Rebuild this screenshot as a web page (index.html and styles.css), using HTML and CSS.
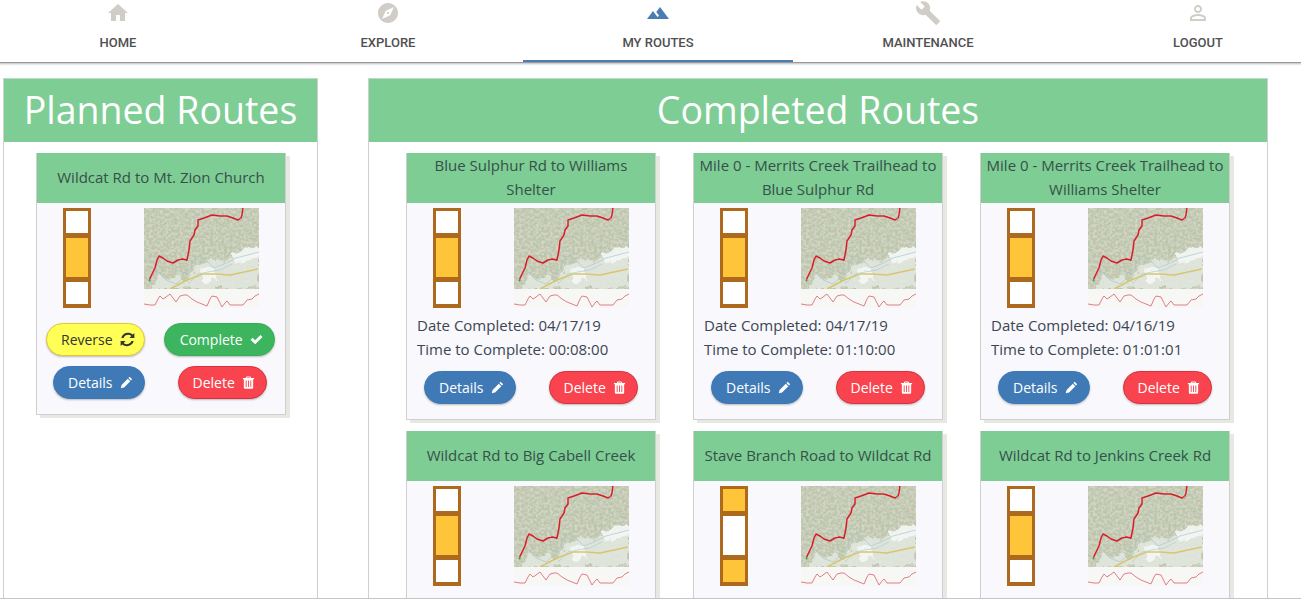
FILE: index.html
```html
<!DOCTYPE html>
<html lang="en">
<head>
    <meta charset="UTF-8" />
    <meta name="viewport" content="width=device-width, initial-scale=1" />
    <title>My Routes</title>
    <link rel="stylesheet" href="styles.css">
</head>
<body>
    <svg class="defs" width="0" height="0">
        <defs>
            <filter id="terrain" x="0" y="0" width="100%" height="100%">
                <feTurbulence type="fractalNoise" baseFrequency="0.36" numOctaves="3" seed="11" />
                <feColorMatrix type="matrix" values="0 0 0 0 0.50  0 0 0 0 0.55  0 0 0 0 0.42  2.8 0 0 0 -0.85" />
            </filter>
            <filter id="rough" x="-10%" y="-10%" width="120%" height="120%">
                <feTurbulence type="fractalNoise" baseFrequency="0.12" numOctaves="3" seed="4" result="n" />
                <feDisplacementMap in="SourceGraphic" in2="n" scale="12" xChannelSelector="R" yChannelSelector="G" />
                <feGaussianBlur stdDeviation="0.6" />
            </filter>
            <filter id="jag" x="-5%" y="-5%" width="110%" height="110%">
                <feTurbulence type="fractalNoise" baseFrequency="0.5" numOctaves="2" seed="9" result="n" />
                <feDisplacementMap in="SourceGraphic" in2="n" scale="2" xChannelSelector="R" yChannelSelector="G" />
            </filter>
            <symbol id="map" viewBox="0 0 115 100">
                <rect width="115" height="81" fill="#d2d6c2" />
                <rect width="115" height="81" filter="url(#terrain)" />
                <path d="M8 81 L14 66 L24 72 L34 66 L44 76 L52 58 L66 50 L84 52 L115 42 V81 Z" fill="#e4e9e2" opacity="0.85" filter="url(#rough)" />
                <path d="M84 44 L115 38 V50 L92 56 Z M56 62 L70 60 L76 72 L58 74 Z" fill="#f5f7f5" opacity="0.9" filter="url(#rough)" />
                <path d="M12 62 L22 72 L32 76 L44 66 L50 52 L56 46 L62 52 L70 60 L80 56 L92 50 L115 44" fill="none" stroke="#a5c8cc" stroke-width="0.7" />
                <path d="M44 76 L54 66 L64 64 L76 62 L88 56" fill="none" stroke="#aacbd8" stroke-width="0.7" />
                <path d="M26 81 L43 72 L59 66 L72 66 L86 67 L114 61" fill="none" stroke="#d8c66e" stroke-width="1.5" />
                <g filter="url(#jag)">
                    <path d="M5.5 71.5 L9 64 L11 60 L13 52 L15 48 L19 50 L23 53 L29 55 L34 52 L38 51 L43 52 L45 42 L46 33 L50 27 L51 22 L54 18 L54 12 L60 10 L68 7 L76 8 L83 8 L89 10 L94 12 L97 10 L98 7 L99 -1" fill="none" stroke="#d81f2c" stroke-width="1.5" stroke-linejoin="round" />
                </g>
                <circle cx="5.5" cy="72.5" r="1" fill="#3a9a4a" />
                <rect y="81" width="115" height="19" fill="#f7f7f6" />
                <path d="M0 96 L6 97 L11 97 L14 91 L16 88 L19 91 L22 89 L26 86 L29 90 L32 94 L36 88 L40 87 L43 87 L48 91 L53 94 L58 96 L63 98 L66 91 L68 88 L73 89 L76 95 L78 99 L81 95 L83 93 L86 97 L92 97 L99 97 L103 92 L108 91 L111 88 L115 86" fill="none" stroke="#d8606a" stroke-width="0.8" stroke-linejoin="round" />
            </symbol>
            <symbol id="i-pencil" viewBox="0 0 14 14">
                <path d="M10.4 0.9 L13.1 3.6 L11.8 4.9 L9.1 2.2 Z M8.4 2.9 L11.1 5.6 L4.4 12.3 L0.8 13.2 L1.7 9.6 Z" fill="currentColor" />
            </symbol>
            <symbol id="i-trash" viewBox="0 0 14 14">
                <path fill-rule="evenodd" d="M5 0.5 H9 L10 2.2 H13 V3.6 H12 V12.4 Q12 13.7 10.8 13.7 H3.2 Q2 13.7 2 12.4 V3.6 H1 V2.2 H4 Z M5.6 1.5 L5.2 2.2 H8.8 L8.4 1.5 Z M4 4.8 V11.8 H5 V4.8 Z M6.5 4.8 V11.8 H7.5 V4.8 Z M9 4.8 V11.8 H10 V4.8 Z" fill="currentColor" />
            </symbol>
            <symbol id="i-check" viewBox="0 0 14 14">
                <path d="M0.6 7.2 L2.8 5 L5.6 7.8 L11.2 2.2 L13.4 4.4 L5.6 12.2 Z" fill="currentColor" />
            </symbol>
            <symbol id="i-refresh" viewBox="0 0 14 14">
                <path d="M13.4 1 V5.6 H8.8 L10.6 3.8 C8.4 1.8 4.6 2.4 3.3 5.6 H1.2 C2.4 0.9 8 -0.7 12 2.4 Z M0.6 13 V8.4 H5.2 L3.4 10.2 C5.6 12.2 9.4 11.6 10.7 8.4 H12.8 C11.6 13.1 6 14.7 2 11.6 Z" fill="currentColor" />
            </symbol>
        </defs>
    </svg>

    <nav class="tabs">
        <a class="tab">
            <svg class="tab-icon" viewBox="0 0 24 24"><path d="M10 20v-6h4v6h5v-8h3L12 3 2 12h3v8z" /></svg>
            <span>HOME</span>
        </a>
        <a class="tab">
            <svg class="tab-icon" viewBox="0 0 24 24"><path d="M12 10.9c-.61 0-1.1.49-1.1 1.1s.49 1.1 1.1 1.1c.61 0 1.1-.49 1.1-1.1s-.49-1.1-1.1-1.1zM12 2C6.48 2 2 6.48 2 12s4.48 10 10 10 10-4.48 10-10S17.52 2 12 2zm2.19 12.19L6 18l3.81-8.19L18 6l-3.81 8.19z" /></svg>
            <span>EXPLORE</span>
        </a>
        <a class="tab active">
            <svg class="tab-icon" viewBox="0 0 24 24"><path d="M14 6l-3.75 5 2.85 3.8-1.6 1.2C9.81 13.75 7 10 7 10l-6 8h22L14 6z" /></svg>
            <span>MY ROUTES</span>
        </a>
        <a class="tab">
            <svg class="tab-icon wrench" viewBox="0 0 24 24"><path d="M22.7 19l-9.1-9.1c.9-2.3.4-5-1.5-6.9-2-2-5-2.4-7.4-1.3L9 6 6 9 1.6 4.7C.4 7.1.9 10.1 2.9 12.1c1.9 1.9 4.6 2.4 6.9 1.5l9.1 9.1c.4.4 1 .4 1.4 0l2.3-2.3c.5-.4.5-1.1.1-1.4z" /></svg>
            <span>MAINTENANCE</span>
        </a>
        <a class="tab">
            <svg class="tab-icon" viewBox="0 0 24 24"><path d="M12 5.9c1.16 0 2.1.94 2.1 2.1s-.94 2.1-2.1 2.1S9.9 9.16 9.9 8s.94-2.1 2.1-2.1m0 9c2.97 0 6.1 1.46 6.1 2.1v1.1H5.9V17c0-.64 3.13-2.1 6.1-2.1M12 4C9.79 4 8 5.79 8 8s1.79 4 4 4 4-1.79 4-4-1.79-4-4-4zm0 9c-2.67 0-8 1.34-8 4v3h16v-3c0-2.66-5.33-4-8-4z" /></svg>
            <span>LOGOUT</span>
        </a>
    </nav>

    <main class="columns">
        <section class="panel planned">
            <h1>Planned Routes</h1>
            <div class="planned-list">
                <article class="card">
                    <h2>Wildcat Rd to Mt. Zion Church</h2>
                    <div class="card-media">
                        <div class="sign"><i></i><i class="on"></i><i></i></div>
                        <svg class="map"><use href="#map" /></svg>
                    </div>
                    <div class="actions first-actions">
                        <button class="btn yellow">Reverse <svg><use href="#i-refresh" /></svg></button>
                        <button class="btn green">Complete <svg><use href="#i-check" /></svg></button>
                    </div>
                    <div class="actions">
                        <button class="btn blue">Details <svg><use href="#i-pencil" /></svg></button>
                        <button class="btn red">Delete <svg><use href="#i-trash" /></svg></button>
                    </div>
                </article>
            </div>
        </section>

        <section class="panel completed">
            <h1>Completed Routes</h1>
            <div class="card-grid">
                <article class="card">
                    <h2>Blue Sulphur Rd to Williams Shelter</h2>
                    <div class="card-media">
                        <div class="sign"><i></i><i class="on"></i><i></i></div>
                        <svg class="map"><use href="#map" /></svg>
                    </div>
                    <p class="stats">Date Completed: 04/17/19<br>Time to Complete: 00:08:00</p>
                    <div class="actions">
                        <button class="btn blue">Details <svg><use href="#i-pencil" /></svg></button>
                        <button class="btn red">Delete <svg><use href="#i-trash" /></svg></button>
                    </div>
                </article>
                <article class="card">
                    <h2>Mile 0 - Merrits Creek Trailhead to Blue Sulphur Rd</h2>
                    <div class="card-media">
                        <div class="sign"><i></i><i class="on"></i><i></i></div>
                        <svg class="map"><use href="#map" /></svg>
                    </div>
                    <p class="stats">Date Completed: 04/17/19<br>Time to Complete: 01:10:00</p>
                    <div class="actions">
                        <button class="btn blue">Details <svg><use href="#i-pencil" /></svg></button>
                        <button class="btn red">Delete <svg><use href="#i-trash" /></svg></button>
                    </div>
                </article>
                <article class="card">
                    <h2>Mile 0 - Merrits Creek Trailhead to Williams Shelter</h2>
                    <div class="card-media">
                        <div class="sign"><i></i><i class="on"></i><i></i></div>
                        <svg class="map"><use href="#map" /></svg>
                    </div>
                    <p class="stats">Date Completed: 04/16/19<br>Time to Complete: 01:01:01</p>
                    <div class="actions">
                        <button class="btn blue">Details <svg><use href="#i-pencil" /></svg></button>
                        <button class="btn red">Delete <svg><use href="#i-trash" /></svg></button>
                    </div>
                </article>
                <article class="card">
                    <h2>Wildcat Rd to Big Cabell Creek</h2>
                    <div class="card-media">
                        <div class="sign"><i></i><i class="on"></i><i></i></div>
                        <svg class="map"><use href="#map" /></svg>
                    </div>
                </article>
                <article class="card">
                    <h2>Stave Branch Road to Wildcat Rd</h2>
                    <div class="card-media">
                        <div class="sign"><i class="on"></i><i></i><i class="on"></i></div>
                        <svg class="map"><use href="#map" /></svg>
                    </div>
                </article>
                <article class="card">
                    <h2>Wildcat Rd to Jenkins Creek Rd</h2>
                    <div class="card-media">
                        <div class="sign"><i></i><i class="on"></i><i></i></div>
                        <svg class="map"><use href="#map" /></svg>
                    </div>
                </article>
            </div>
        </section>
    </main>
</body>
</html>
```

FILE: styles.css
```css
html { margin: 0; height: 600px; overflow: hidden; background: white; }
body { margin: 0; height: 599px; overflow: hidden; box-sizing: border-box; border-bottom: 1px solid #c4c4c4; background: white; font-family: "Open Sans", sans-serif; color: #3c4650; }
.defs { display: block; }

/* top tabs, five 270px tabs that run past both window edges */
.tabs { display: flex; height: 60px; margin-left: -17px; width: 1350px; border-bottom: 1px solid #999; box-shadow: 0 1px 2px #bbb; padding-bottom: 2px; }
.tab { width: 270px; display: flex; flex-direction: column; align-items: center; font-family: Roboto, sans-serif; font-size: 13px; font-weight: 500; color: #505050; box-sizing: border-box; height: 62px; padding-top: 1px; }
.tab span { margin-top: 10px; line-height: 16px; }
.tab-icon { width: 24px; height: 24px; fill: #cfcdc6; }
.tab-icon.wrench { width: 26px; height: 26px; margin-top: -1px; margin-bottom: -1px; }
.tab.active { border-bottom: 2px solid #4a7eb2; }
.tab.active .tab-icon { fill: #4a7eb2; }

.columns { display: flex; gap: 50px; height: 520px; margin: 15px 0 0 3px; }
.panel { border: 1px solid #cfcfcf; border-top: 0; border-bottom: 0; box-sizing: border-box; overflow: hidden; }
.planned { width: 315px; }
.completed { width: 900px; }
.panel h1 { margin: 0; height: 64px; line-height: 62px; background: #7dcd94; border-top: 1px solid #b9dcc2; box-sizing: border-box; color: white; font-size: 37.5px; font-weight: 400; text-align: center; }

.planned-list { padding: 11px 0 0 32px; }
.card-grid { display: grid; grid-template-columns: repeat(3, 250px); column-gap: 37px; row-gap: 11px; padding: 11px 0 0 37px; }

.card { width: 250px; background: #f8f8fd; border: 1px solid #cfcfcf; border-top: 0; box-sizing: border-box; box-shadow: 4px 3px 0 #e8e8e3; padding-bottom: 15px; }
.card h2 { margin: 0; height: 50px; display: flex; align-items: center; justify-content: center; background: #7dcd94; text-align: center; color: #37504a; font-size: 15px; font-weight: 400; line-height: 24px; padding: 0 5px 2px; box-sizing: border-box; }

.card-media { display: flex; padding: 5px 0 0 26px; }
.sign { width: 28px; height: 100px; box-sizing: border-box; border: 3px solid #ad6a1f; border-bottom-width: 4px; background: #ad6a1f; display: flex; flex-direction: column; gap: 5px; }
.sign i { flex: 1; background: white; }
.sign i:nth-child(2) { flex: none; height: 39px; }
.sign i.on { background: #ffc53a; }
.map { width: 115px; height: 100px; margin-left: 53px; }

.stats { margin: 5px 0 0 10px; font-size: 15px; line-height: 24px; color: #3c4650; }

.actions { display: flex; margin-top: 10px; padding-left: 16px; gap: 33px; }
.first-actions { margin-top: 15px; padding-left: 9px; gap: 19px; }
.completed .actions { padding-left: 17px; }
.btn { height: 33px; border-radius: 17px; border: 1px solid; padding: 0 11px 0 14px; font-family: "Open Sans", sans-serif; font-size: 14px; display: inline-flex; align-items: center; gap: 7px; box-shadow: 0 1px 2px #bbb; color: white; white-space: nowrap; }
.btn svg { width: 13px; height: 13px; }
.blue { background: #3f7ab6; border-color: #3a78ba; }
.red { background: #f9444f; border-color: #d9303c; }
.green { background: #3cb55e; border-color: #38ad58; padding-left: 15px; }
.yellow { background: #ffff55; border-color: #e3c53a; color: #333; padding-right: 9px; }
.yellow svg { width: 15px; height: 15px; }
```
